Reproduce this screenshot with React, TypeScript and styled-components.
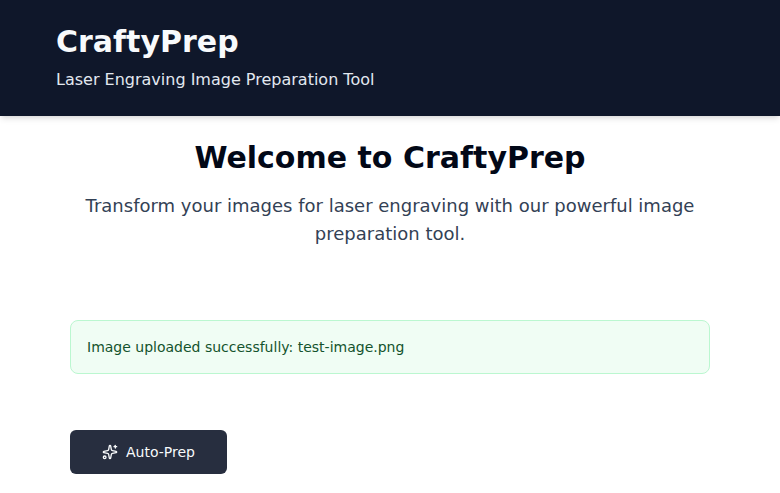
import React from 'react';
import styled, { createGlobalStyle } from 'styled-components';
import { Sparkles } from 'lucide-react';

const GlobalStyle = createGlobalStyle`
  *, *::before, *::after { box-sizing: border-box; }
  body {
    margin: 0;
    background: #fff;
    color: #020817;
    font-family: "DejaVu Sans", sans-serif;
    line-height: 1.5;
    overflow: hidden;
  }
  h1, h2, p { margin: 0; }
`;

const Header = styled.header`
  height: 116px;
  padding: 24px 56px;
  background: #0f172a;
  color: #f8fafc;
  box-shadow: 0 4px 6px -1px rgb(0 0 0 / 0.1), 0 2px 4px -2px rgb(0 0 0 / 0.1);
`;

const Brand = styled.h1`
  font-size: 30px;
  line-height: 36px;
  font-weight: 700;
`;

const Tagline = styled.p`
  margin-top: 8px;
  font-size: 16px;
  line-height: 24px;
  color: #e2e8f0;
`;

const Main = styled.main`
  width: 640px;
  margin: 0 auto;
  padding-top: 24px;
`;

const Intro = styled.section`
  text-align: center;
`;

const Title = styled.h2`
  font-size: 30px;
  line-height: 36px;
  font-weight: 700;
`;

const Lead = styled.p`
  margin-top: 16px;
  font-size: 18px;
  line-height: 28px;
  color: #334155;
`;

const Notice = styled.div`
  margin-top: 72px;
  padding: 16px;
  border: 1px solid #bbf7d0;
  border-radius: 8px;
  background: #f0fdf4;
  color: #14532d;
  font-size: 14px;
  line-height: 20px;
`;

const PrepButton = styled.button`
  display: inline-flex;
  align-items: center;
  justify-content: center;
  gap: 8px;
  height: 44px;
  margin-top: 56px;
  padding: 0 32px;
  border: 0;
  border-radius: 6px;
  background: #272e3f;
  color: #f8fafc;
  font: 500 14px/20px "DejaVu Sans", sans-serif;
`;

export default function App() {
  return (
    <>
      <GlobalStyle />
      <Header>
        <Brand>CraftyPrep</Brand>
        <Tagline>Laser Engraving Image Preparation Tool</Tagline>
      </Header>
      <Main>
        <Intro>
          <Title>Welcome to CraftyPrep</Title>
          <Lead>Transform your images for laser engraving with our powerful image preparation tool.</Lead>
        </Intro>
        <Notice role="status">Image uploaded successfully: test-image.png</Notice>
        <PrepButton type="button">
          <Sparkles size={16} aria-hidden="true" />
          Auto-Prep
        </PrepButton>
      </Main>
    </>
  );
}
